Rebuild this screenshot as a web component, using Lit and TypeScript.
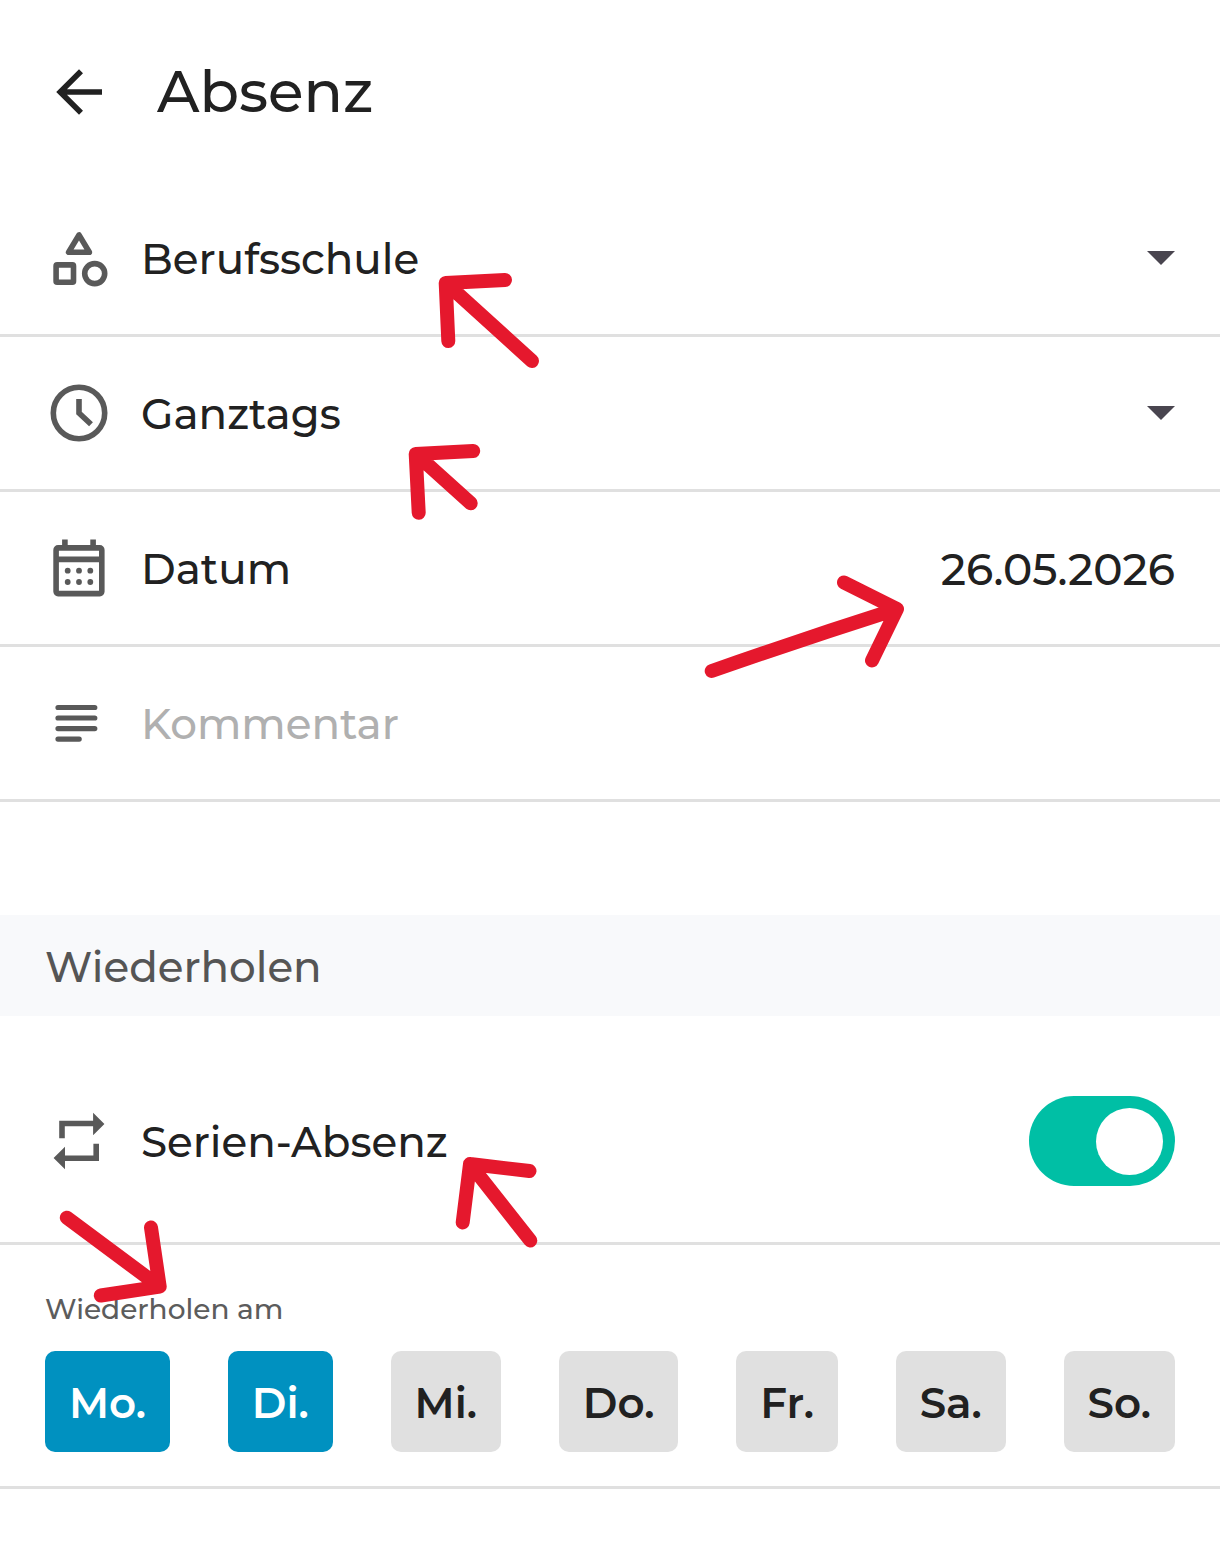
import { LitElement, html, svg, css } from "lit";
import { customElement, state } from "lit/decorators.js";
import { classMap } from "lit/directives/class-map.js";

const arrow = (name: string, viewBox: string, d: string) => svg`
  <svg class="mark ${name}" viewBox=${viewBox} aria-hidden="true"><path d=${d} /></svg>`;

@customElement("app-root")
export class AppRoot extends LitElement {
  static styles = css`
    :host {
      display: block;
      min-height: 100vh;
      overflow-x: hidden;
      background: #fff;
      color: #212121;
      font-family: Montserrat, Inter, sans-serif;
      font-size: 42px;
      font-weight: 500;
      line-height: 56px;
    }
    * { box-sizing: border-box; }
    header {
      display: flex;
      align-items: center;
      gap: 44px;
      padding: 52px 45px 50px;
    }
    h1 { margin: 0; font-size: 58px; line-height: 80px; font-weight: 500; }
    h2 {
      margin: 113px 0 0;
      padding: 24px 45px 21px;
      background: #f8f9fb;
      color: #555;
      font-size: 42px;
      line-height: 56px;
      font-weight: 500;
    }
    button, input, select {
      font: inherit;
      color: inherit;
      border: 0;
      margin: 0;
      padding: 0;
      background: none;
      border-radius: 0;
    }
    .back { display: flex; }
    .row {
      position: relative;
      display: flex;
      align-items: center;
      gap: 28px;
      padding: 42px 45px;
      border-bottom: 3px solid #e0e0e0;
    }
    .icon {
      display: block;
      width: 68px;
      height: 68px;
      flex: none;
      fill: none;
      stroke: #595959;
      stroke-width: 5.6;
    }
    .back .icon { stroke: #212121; }
    .icon .solid { fill: #595959; stroke: none; }
    .tag { display: flex; flex: none; align-items: center; gap: 28px; }
    .tag span { padding-top: 2px; }
    .pick { position: relative; display: flex; flex: 1; align-items: center; min-width: 0; }
    select { appearance: none; width: 100%; height: 60px; padding-top: 2px; }
    .caret {
      position: absolute;
      right: 0;
      width: 28px;
      height: 14px;
      fill: #49454f;
      pointer-events: none;
    }
    .entry { flex: 1; min-width: 0; width: 0; height: 60px; padding-top: 2px; }
    .date { text-align: right; font-size: 44px; }
    .entry::placeholder { color: #b0b0b0; opacity: 1; }
    .series { justify-content: space-between; padding: 80px 45px 56px; }
    .switch {
      appearance: none;
      display: flex;
      justify-content: flex-start;
      width: 146px;
      height: 90px;
      flex: none;
      padding: 12px;
      border-radius: 45px;
      background: #bdbdbd;
    }
    .switch:checked { justify-content: flex-end; background: #00bfa5; }
    .switch::before {
      content: "";
      width: 67px;
      height: 67px;
      border-radius: 50%;
      background: #fff;
    }
    .repeat {
      position: relative;
      padding: 44px 45px 34px;
      border-bottom: 3px solid #e0e0e0;
    }
    .caption { margin: 0 0 22px; color: #5c5c5c; font-size: 28px; line-height: 40px; }
    .days { display: flex; justify-content: space-between; }
    .day {
      padding: 24px 24px 21px;
      border-radius: 10px;
      background: #e0e0e0;
      font-weight: 600;
    }
    .day.on { background: #0091c0; color: #fff; }
    .mark {
      position: absolute;
      z-index: 1;
      pointer-events: none;
      fill: none;
      stroke: #e5182d;
      stroke-width: 14;
      stroke-linecap: round;
      stroke-linejoin: round;
    }
    .mark-type { left: 430px; top: 82px; width: 120px; height: 110px; }
    .mark-span { left: 400px; top: 97px; width: 90px; height: 90px; }
    .mark-date { right: 310px; top: 74px; width: 210px; height: 116px; }
    .mark-series { left: 450px; top: 134px; width: 96px; height: 106px; }
    .mark-days { left: 56px; top: -39px; width: 116px; height: 100px; }
  `;

  @state() private series = true;
  @state() private active = new Set(["Mo.", "Di."]);

  private days = ["Mo.", "Di.", "Mi.", "Do.", "Fr.", "Sa.", "So."];

  private toggle(day: string) {
    const next = new Set(this.active);
    if (!next.delete(day)) next.add(day);
    this.active = next;
  }

  private caret = html`<svg class="caret" viewBox="0 0 28 14" aria-hidden="true"><path d="M0 0H28L14 14Z" /></svg>`;

  render() {
    return html`
      <header>
        <button class="back" aria-label="Zurück">
          <svg class="icon" viewBox="45 58 68 68" aria-hidden="true">
            <path d="M102 92H61M81 71.2L60.2 92L81 112.8" />
          </svg>
        </button>
        <h1>Absenz</h1>
      </header>
      <main>
        <div class="row">
          <label class="tag" for="type" aria-label="Art">
            <svg class="icon" viewBox="45 224 68 68" aria-hidden="true">
              <path stroke-linejoin="round" d="M79 235L68.6 252.3H89.4Z" />
              <rect x="56.1" y="264.9" width="17.4" height="17.4" rx="1" />
              <circle cx="94.7" cy="273.6" r="10" />
            </svg>
          </label>
          <div class="pick">
            <select id="type"><option>Berufsschule</option></select>${this.caret}
          </div>
          ${arrow("mark-type", "430 264 120 110", "M505 280L445.7 283L448.3 341M446 283L532 361")}
        </div>
        <div class="row">
          <label class="tag" for="span" aria-label="Dauer">
            <svg class="icon" viewBox="45 379 68 68" aria-hidden="true">
              <circle cx="79" cy="413" r="25.7" />
              <path d="M79 399V413L91 424.3" />
            </svg>
          </label>
          <div class="pick">
            <select id="span"><option>Ganztags</option></select>${this.caret}
          </div>
          ${arrow("mark-span", "400 434 90 90", "M473.2 451L415.7 454L418.7 512.7M416 454L470.7 503.3")}
        </div>
        <div class="row">
          <label class="tag" for="date">
            <svg class="icon" viewBox="45 534 68 68" aria-hidden="true">
              <rect x="56.1" y="547.9" width="45.7" height="45.7" rx="2" />
              <path d="M56 559.4H102M64.9 539.6V548M93.1 539.6V548" />
              <g class="solid">
                <circle cx="67.7" cy="570.7" r="2.9" /><circle cx="79" cy="570.7" r="2.9" /><circle cx="90.3" cy="570.7" r="2.9" />
                <circle cx="67.7" cy="582" r="2.9" /><circle cx="79" cy="582" r="2.9" /><circle cx="90.3" cy="582" r="2.9" />
              </g>
            </svg>
            <span>Datum</span>
          </label>
          <input class="entry date" id="date" type="text" inputmode="numeric" value="26.05.2026" />
          ${arrow("mark-date", "700 566 210 116", "M844 582.5L897 609L872 660.5M711.7 671Q806 638 897 609")}
        </div>
        <div class="row">
          <label class="tag" for="note" aria-label="Kommentar">
            <svg class="icon" viewBox="45 689 68 68" aria-hidden="true">
              <path stroke-width="5.2" stroke-linecap="round" d="M58 707.5H94.8M58 718H94.8M58 728.6H94.8M58 739.1H79.2" />
            </svg>
          </label>
          <input class="entry" id="note" type="text" placeholder="Kommentar" />
        </div>

        <h2>Wiederholen</h2>
        <div class="row series">
          <label class="tag" for="series">
            <svg class="icon" viewBox="45 1107 68 68" aria-hidden="true">
              <path d="M62 1138.2V1123.5H94M96.2 1143.7V1158.3H64" />
              <path class="solid" d="M93.1 1112.8L104.4 1124L93.1 1135.2ZM65 1146.7L53.6 1158L65 1169.2Z" />
            </svg>
            <span>Serien-Absenz</span>
          </label>
          <input class="switch" id="series" type="checkbox" role="switch" .checked=${this.series}
            @change=${(e: Event) => (this.series = (e.target as HTMLInputElement).checked)} />
          ${arrow("mark-series", "450 1150 96 106", "M529.5 1171L470 1164L462.7 1222.5M470 1164L530.3 1240.5")}
        </div>
        <section class="repeat" aria-labelledby="caption">
          <p class="caption" id="caption">Wiederholen am</p>
          <div class="days">
            ${this.days.map((day) => html`
              <button class=${classMap({ day: true, on: this.active.has(day) })}
                aria-pressed=${this.active.has(day) ? "true" : "false"}
                @click=${() => this.toggle(day)}>${day}</button>`)}
          </div>
          ${arrow("mark-days", "56 1206 116 100", "M151 1227.5L159.7 1286.7L100.8 1295.5M66.8 1217.7L159.7 1286.7")}
        </section>
      </main>
    `;
  }
}
